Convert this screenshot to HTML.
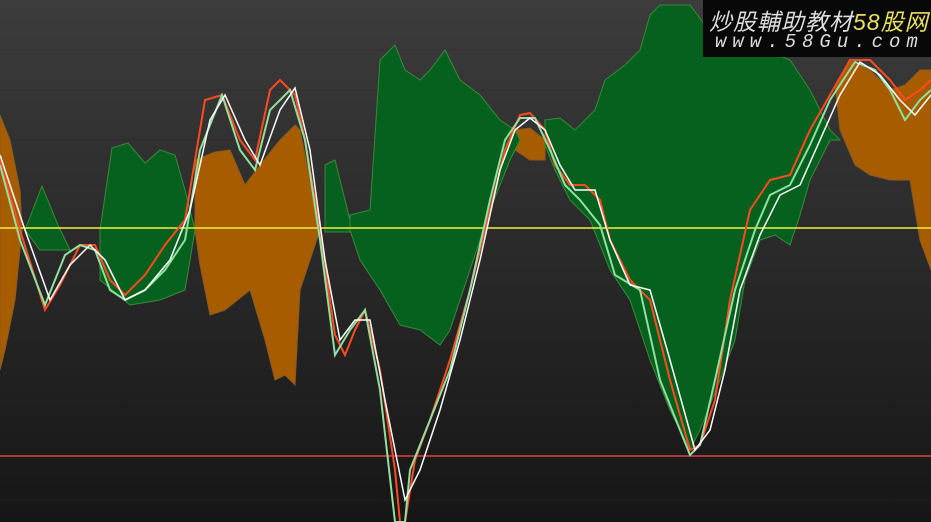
<!DOCTYPE html>
<html><head><meta charset="utf-8"><style>
html,body{margin:0;padding:0;width:931px;height:522px;overflow:hidden;background:#222}
.wm{position:absolute;left:703px;top:0;width:228px;height:57px;background:#080808;font-family:"Liberation Sans","Noto Sans CJK SC",sans-serif;font-style:italic}
.wm .a{position:absolute;left:6px;top:3px;font-size:23px;color:#ddd;letter-spacing:1px;white-space:nowrap}
.wm .a span{color:#e8e060}
.wm .b{position:absolute;left:12px;top:31px;font-size:19px;color:#ddd;letter-spacing:6px;white-space:nowrap;font-family:"Liberation Mono",monospace}
</style></head><body>
<svg width="931" height="522" style="position:absolute;left:0;top:0">
<defs><linearGradient id="bg" x1="0" y1="0" x2="0" y2="1"><stop offset="0" stop-color="#3c3c3c"/><stop offset="1" stop-color="#161616"/></linearGradient></defs>
<rect width="931" height="522" fill="url(#bg)"/>
<g stroke="#3a2020" stroke-width="1" opacity="0.35">
<line x1="0" y1="50" x2="931" y2="50"/><line x1="0" y1="90" x2="931" y2="90"/><line x1="0" y1="140" x2="931" y2="140"/><line x1="0" y1="185" x2="931" y2="185"/><line x1="0" y1="275" x2="931" y2="275"/><line x1="0" y1="320" x2="931" y2="320"/><line x1="0" y1="365" x2="931" y2="365"/><line x1="0" y1="410" x2="931" y2="410"/><line x1="0" y1="500" x2="931" y2="500"/>
</g>
<g fill="#a85c00" stroke="#8a5a20" stroke-width="1">
<polygon points="0,115 10,140 20,190 22,230 15,300 5,350 0,370"/>
<polygon points="195,160 215,152 230,150 245,185 260,165 280,140 295,125 300,130 310,180 320,230 300,290 295,385 285,375 275,380 265,340 250,290 225,310 210,315 200,265 195,230"/>
<polygon points="515,130 530,128 545,140 545,160 530,160 515,150"/>
<polygon points="835,85 850,60 870,70 890,90 905,85 920,70 931,70 931,270 920,240 910,180 890,180 870,175 855,165 840,130"/>
</g>
<g fill="#06601e" stroke="#3a8a3a" stroke-width="1">
<polygon points="25,230 42,186 58,225 70,250 40,250"/>
<polygon points="100,230 112,148 128,143 145,163 160,150 175,155 185,190 195,230 185,290 160,300 130,305 100,280"/>
<polygon points="325,165 335,160 345,200 350,220 350,232 325,232"/>
<polygon points="350,215 370,210 380,60 395,45 405,70 420,80 430,70 445,50 460,80 480,95 500,120 515,130 520,140 510,160 490,210 470,270 450,330 440,345 420,330 400,325 380,290 360,260 350,230"/>
<polygon points="545,120 560,118 575,130 595,110 605,80 625,65 640,50 650,15 660,5 690,5 705,25 790,60 810,90 830,130 840,140 830,140 810,180 800,215 790,245 775,235 760,240 745,280 735,340 720,380 700,430 690,450 670,410 650,360 630,300 610,270 590,220 570,200 555,170 545,145"/>
</g>
<line x1="0" y1="228" x2="931" y2="228" stroke="#f0f040" stroke-width="1.5"/>
<line x1="0" y1="456" x2="931" y2="456" stroke="#e04040" stroke-width="1.5"/>
<polyline fill="none" stroke="#ff4a20" stroke-width="2" points="0,160 20,230 45,310 60,285 80,245 95,245 110,280 125,295 145,275 165,245 185,220 205,100 222,95 240,140 255,160 270,90 280,80 295,95 305,140 320,230 335,335 345,355 355,330 365,310 380,370 395,470 400,522 405,522 415,460 430,420 450,360 470,290 490,210 505,150 520,115 530,113 545,130 555,165 570,185 585,185 600,200 610,240 630,280 650,300 670,380 690,450 700,445 715,400 730,300 750,210 770,180 790,175 810,130 830,95 850,60 870,60 890,80 905,100 920,90 931,80"/>
<polyline fill="none" stroke="#90e0a0" stroke-width="2" points="0,165 20,240 45,305 65,255 80,245 95,250 110,290 125,300 145,290 165,270 185,240 200,150 222,95 240,150 255,170 270,110 290,90 305,140 320,240 335,355 350,330 365,310 380,390 395,522 405,522 410,470 430,420 450,370 470,290 490,200 505,140 520,118 535,118 550,150 565,185 580,200 600,225 615,275 640,290 660,380 690,455 700,445 715,380 735,290 755,230 770,195 790,185 810,145 830,100 855,62 875,70 890,90 905,120 920,100 931,90"/>
<polyline fill="none" stroke="#ffffff" stroke-width="1.5" points="0,155 25,230 50,300 70,265 90,245 105,260 125,300 145,290 170,260 190,210 210,120 225,95 245,140 260,165 280,110 295,88 310,150 325,260 340,340 355,320 370,320 385,400 405,500 420,470 440,410 460,340 480,260 500,170 515,130 530,118 545,130 560,165 575,190 595,190 610,240 630,285 650,290 670,360 695,450 710,430 725,370 740,290 760,235 780,195 800,185 820,140 840,95 860,62 880,75 900,100 915,115 931,95"/>
</svg>
<div class="wm"><div class="a">炒股輔助教材<span>58股网</span></div><div class="b">www.58Gu.com</div></div>
</body></html>
